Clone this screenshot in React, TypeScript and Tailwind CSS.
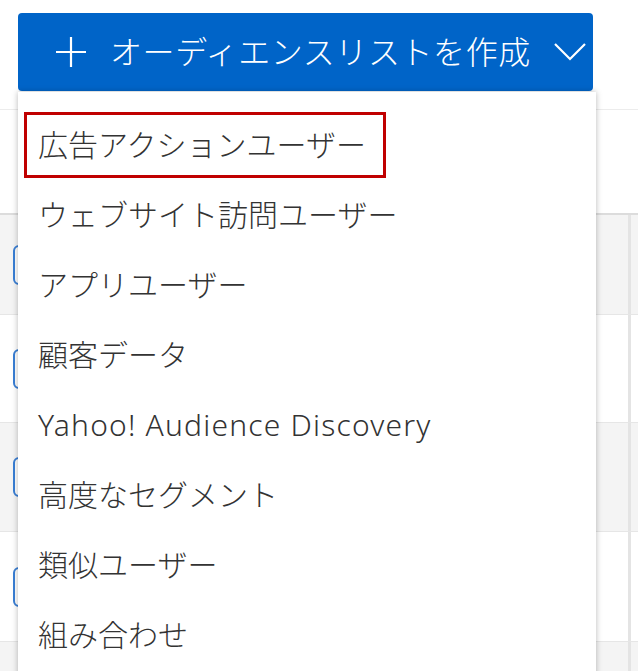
import React from "react";

const items = [
  "広告アクションユーザー",
  "ウェブサイト訪問ユーザー",
  "アプリユーザー",
  "顧客データ",
  "Yahoo! Audience Discovery",
  "高度なセグメント",
  "類似ユーザー",
  "組み合わせ",
];

function Row({ grey, h, check }: { grey: boolean; h: string; check: boolean }) {
  return (
    <div className={`flex items-center border-b border-[#e6e6e6] ${grey ? "bg-[#f4f4f4]" : "bg-white"} ${h}`}>
      <div className="w-[13px] shrink-0" />
      {check ? (
        <div className="w-[40px] h-[40px] shrink-0 rounded-[6px] border-2 border-[#3a7fd5] bg-white" />
      ) : (
        <div className="w-[40px] shrink-0" />
      )}
      <div className="flex-1" />
      <div className="w-[3px] self-stretch bg-[#e4e4e4] mr-[7px]" />
    </div>
  );
}

export default function App() {
  return (
    <div
      className="relative w-[638px] h-[671px] overflow-hidden bg-white"
      style={{ fontFamily: '"Noto Sans", "Noto Sans CJK JP", sans-serif' }}
    >
      {/* background table */}
      <div className="flex flex-col">
        <div className="h-[110px] border-b border-[#ececec]" />
        <div className="h-[105px] border-b-2 border-[#dcdcdc]" />
        <Row grey h="h-[100px]" check />
        <Row grey={false} h="h-[108px]" check />
        <Row grey h="h-[109px]" check />
        <Row grey={false} h="h-[110px]" check />
        <Row grey h="h-[100px]" check={false} />
      </div>

      {/* button + menu overlay */}
      <div className="absolute left-[18px] top-[13px] w-[578px]">
        <div className="flex items-center h-[78px] w-[575px] rounded-[4px] bg-[#0064c8] text-white">
          <svg width="32" height="32" viewBox="0 0 32 32" className="ml-[37px] shrink-0">
            <path d="M16 1 V31 M1 16 H31" stroke="white" strokeWidth="2.2" fill="none" />
          </svg>
          <span className="ml-[23px] text-[32px] font-light leading-none tracking-[0.6px] whitespace-nowrap">
            オーディエンスリストを作成
          </span>
          <svg width="34" height="20" viewBox="0 0 34 20" className="ml-auto mr-[6px] shrink-0">
            <path d="M2 2 L17 17 L32 2" stroke="white" strokeWidth="2.2" fill="none" />
          </svg>
        </div>
        <div className="mt-[1px] h-[600px] bg-white shadow-[0_0_6px_rgba(0,0,0,0.28)] pt-[18px] text-[#333333]">
          {items.map((t, i) => (
            <div key={t} className="h-[70px] flex items-center pl-[20px]">
              <span
                className={`text-[30px] font-light leading-none whitespace-nowrap ${
                  i === 4 ? "tracking-[1.2px]" : ""
                }`}
              >
                {t}
              </span>
            </div>
          ))}
        </div>
        {/* highlight box */}
        <div className="absolute left-[6px] top-[99px] w-[362px] h-[66px] border-[3px] border-[#c00000]" />
      </div>
    </div>
  );
}
